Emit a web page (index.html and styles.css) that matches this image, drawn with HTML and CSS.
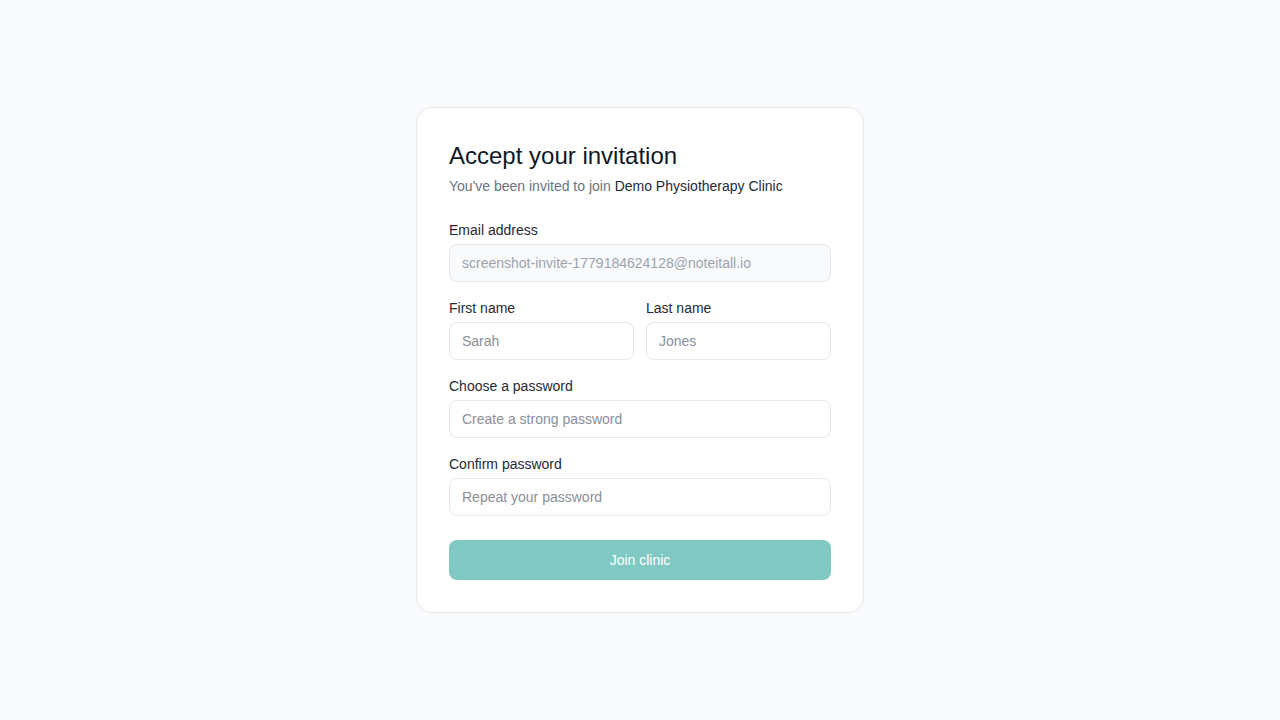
FILE: index.html
```html
<!DOCTYPE html>
<html lang="en">
<head>
<meta charset="utf-8">
<title>Accept your invitation</title>
<link rel="stylesheet" href="styles.css">
</head>
<body>
<main class="page">
  <form class="card">
    <h1 class="title">Accept your invitation</h1>
    <p class="subtitle">You've been invited to join <span class="clinic">Demo Physiotherapy Clinic</span></p>

    <div class="fields">
      <div class="field">
        <label class="label" for="email">Email address</label>
        <input class="input input-disabled" id="email" type="email" value="screenshot-invite-1779184624128@noteitall.io" disabled>
      </div>

      <div class="row">
        <div class="field">
          <label class="label" for="first">First name</label>
          <input class="input" id="first" type="text" placeholder="Sarah">
        </div>
        <div class="field">
          <label class="label" for="last">Last name</label>
          <input class="input" id="last" type="text" placeholder="Jones">
        </div>
      </div>

      <div class="field">
        <label class="label" for="pw">Choose a password</label>
        <input class="input" id="pw" type="password" placeholder="Create a strong password">
      </div>

      <div class="field">
        <label class="label" for="pw2">Confirm password</label>
        <input class="input" id="pw2" type="password" placeholder="Repeat your password">
      </div>
    </div>

    <button class="button" type="button">Join clinic</button>
  </form>
</main>
</body>
</html>
```

FILE: styles.css
```css
* {
  box-sizing: border-box;
}

html, body {
  margin: 0;
  padding: 0;
}

body {
  background: #f9fafb;
  font-family: "Liberation Sans", Arial, sans-serif;
  color: #111827;
}

.page {
  min-height: 720px;
  display: flex;
  align-items: center;
  justify-content: center;
}

.card {
  width: 448px;
  background: #ffffff;
  border: 1px solid #e5e7eb;
  border-radius: 16px;
  padding: 32px;
  display: flex;
  flex-direction: column;
}

.title {
  margin: 0;
  font-size: 24px;
  line-height: 32px;
  font-weight: 400;
  color: #111827;
}

.subtitle {
  margin: 4px 0 0;
  font-size: 14px;
  line-height: 20px;
  color: #6b7280;
}

.clinic {
  color: #1f2937;
}

.fields {
  margin-top: 24px;
  display: flex;
  flex-direction: column;
  gap: 16px;
}

.row {
  display: grid;
  grid-template-columns: 1fr 1fr;
  gap: 12px;
}

.field {
  display: flex;
  flex-direction: column;
  gap: 4px;
}

.label {
  font-size: 14px;
  line-height: 20px;
  color: #1f2937;
}

.input {
  height: 38px;
  width: 100%;
  border: 1px solid #e5e7eb;
  border-radius: 8px;
  background: #ffffff;
  padding: 0 12px;
  font-family: "Liberation Sans", Arial, sans-serif;
  font-size: 14px;
  color: #1f2937;
  outline: none;
}

.input::placeholder {
  color: #8a8f98;
  opacity: 1;
}

.input-disabled {
  background: #f9fafb;
  color: #9ca3af;
  -webkit-text-fill-color: #9ca3af;
  opacity: 1;
}

.button {
  margin-top: 24px;
  height: 40px;
  width: 100%;
  border: none;
  border-radius: 8px;
  background: #80c9c2;
  color: #ffffff;
  font-family: "Liberation Sans", Arial, sans-serif;
  font-size: 14px;
  cursor: not-allowed;
}
```
